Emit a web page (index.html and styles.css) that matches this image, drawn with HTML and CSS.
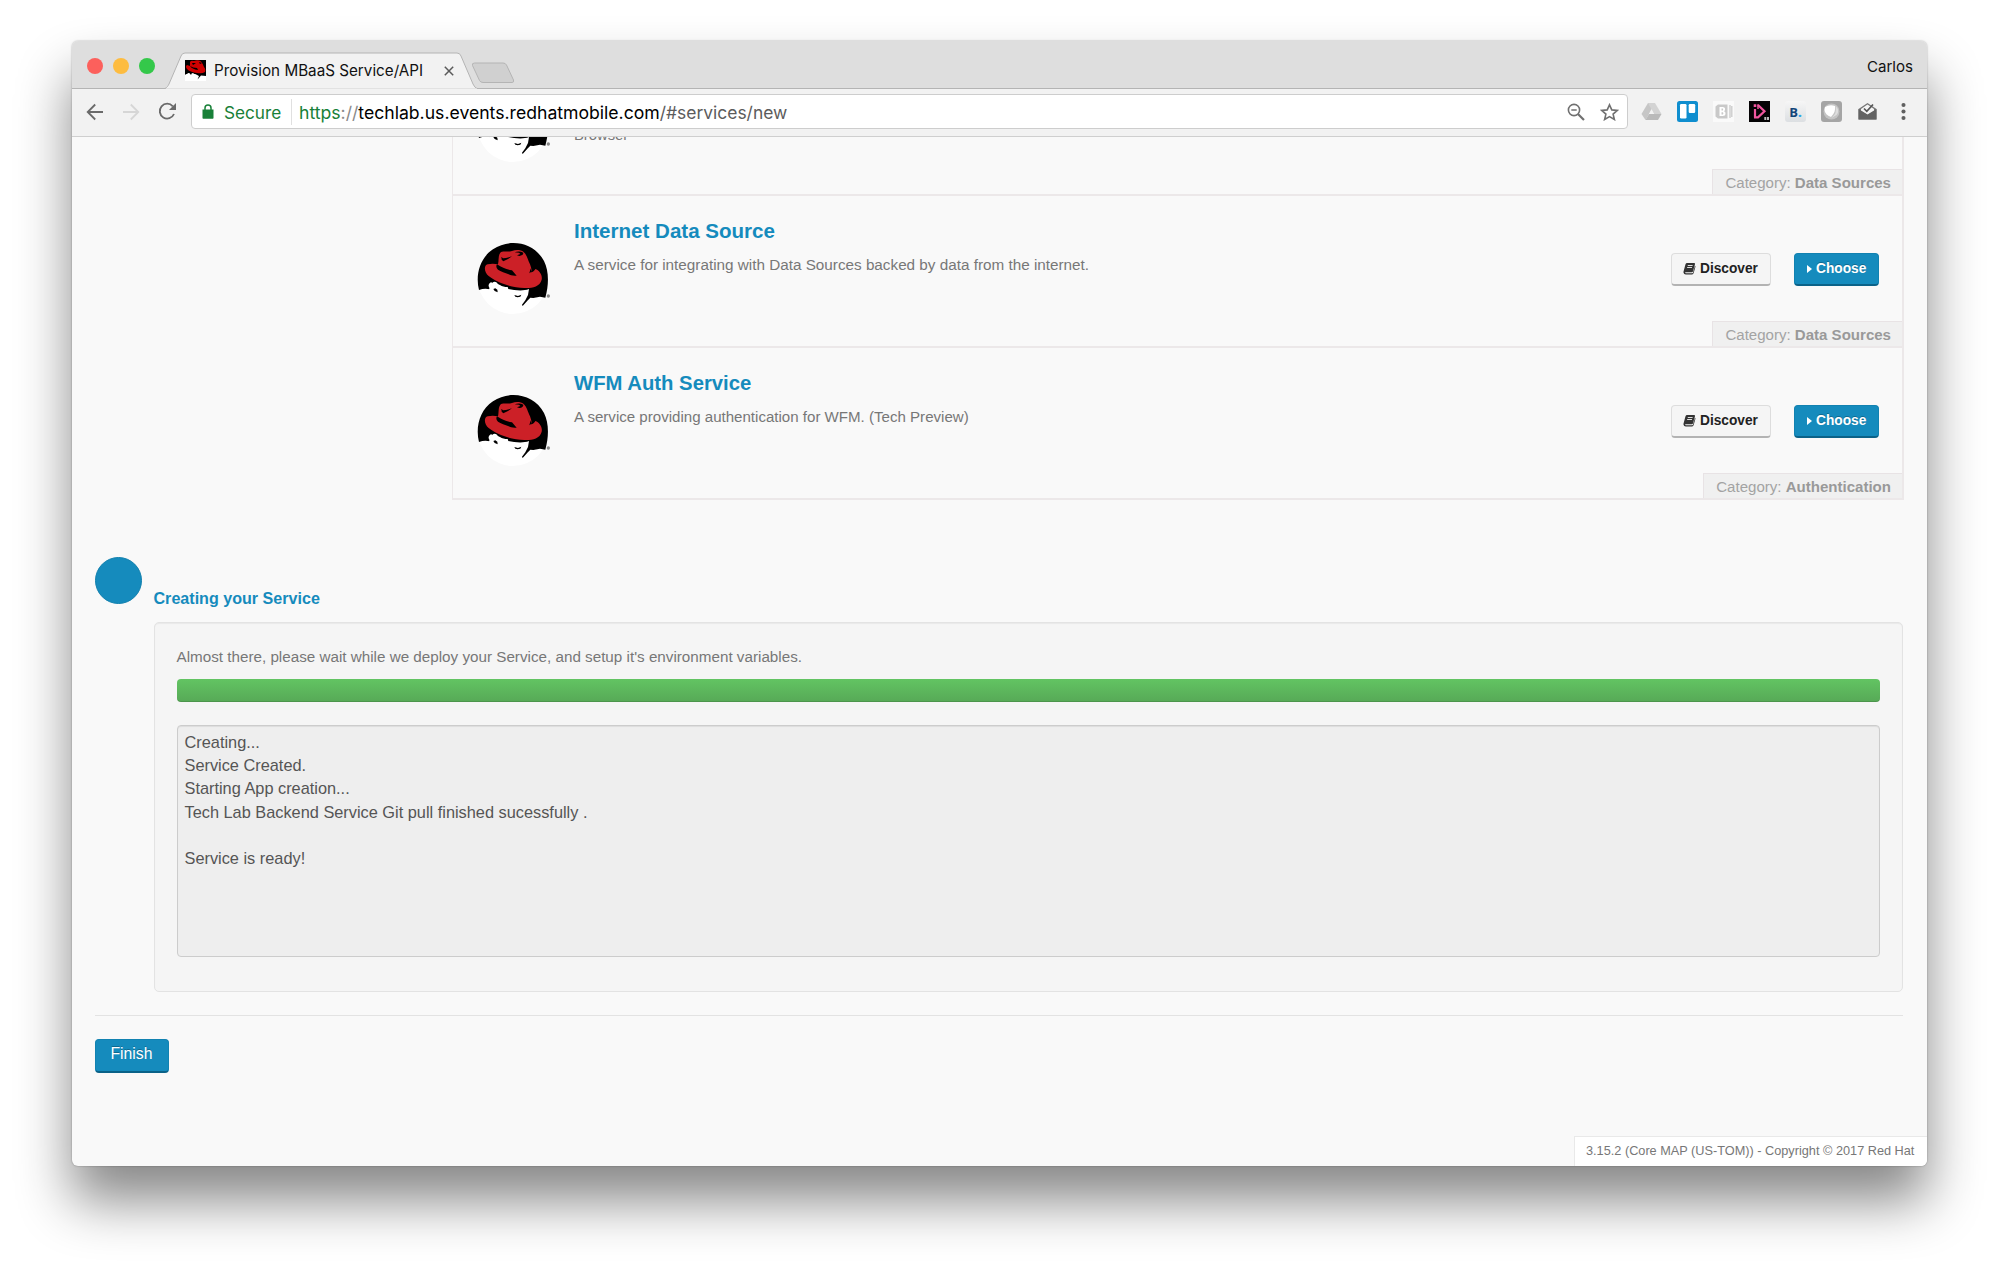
FILE: index.html
```
<!DOCTYPE html>
<html lang="en">
<head>
<meta charset="utf-8">
<title>Provision MBaaS Service/API</title>
<link rel="stylesheet" href="styles.css">
</head>
<body>
<svg class="defs" width="0" height="0" aria-hidden="true">
  <symbol id="redhat" viewBox="0 0 270 270">
    <circle cx="129" cy="149" r="106" fill="#fff"/>
    <path fill="#000" d="M27 183C16 140 28 88 69 61C120 27 192 40 222 96C237 126 237 166 226 206L210 203L190 207L181 206L172 215L158 231L156 227L166 214L174 198L177 180C160 187 134 184 115 180L113 174C104 174 96 173 90 168L84 166L86 175L92 188L80 189L72 181L76 190L64 184L70 178L66 162C66 156 54 162 56 172L60 181Q44 176 27 183Z"/>
    <path fill="#fff" d="M56 184C62 172 64 158 74 158C82 158 84 168 94 174L114 177L112 190L84 196L60 194Z"/>
    <path fill="#000" d="M70 180L76 178L82 182L83 190L74 186ZM133 198L144 201L154 197L151 203L143 205L136 203Z"/>
    <path fill="#cc2027" d="M84 106C87 94 84 80 91 71C97 64 112 70 126 66C137 62 152 62 161 69C171 78 173 92 180 106C183 116 187 124 182 130C189 130 196 122 196 120C208 124 218 138 215 152C209 174 185 178 163 177C123 176 81 161 56 141C43 130 40 109 53 106C63 104 74 104 83 106Z"/>
    <path fill="#000" d="M81 106C96 115 108 122 126 124L140 140C130 141 120 139 116 136C106 131 92 128 84 122C78 116 78 110 81 106ZM94 83L99 88L108 87L126 82L114 90L100 97L95 92ZM134 70Q148 65 160 71Q160 79 148 81L141 79L151 75L147 71ZM182 118L184 128L178 133Z"/>
    <circle cx="235" cy="201" r="5" fill="#888"/>
  </symbol>
  <symbol id="book" viewBox="0 0 14 14">
    <path fill="#333" d="M4.4 1.2H12q1.2.1.9 1.2L10.8 10q-.3 1-1.4 1H3q-1 0-.8.6.2.5.9.5h6.9q.6 0 .8-.7l2.1-7.3q.7.3.5 1.1l-2 7q-.4 1.200-1.600 1.200H3Q.9 13.300.5 11.300q-.1-.9.3-2L2.600 2.600Q3.100 1.200 4.400 1.200Z"/>
    <path fill="#ddd" d="M5.300 3.300 5 4.300h5.200l.3-1ZM4.600 5.400l-.3 1h5.200l.3-1Z"/>
  </symbol>
</svg>

<div class="window">
  <header class="tabstrip">
    <div class="lights"><i class="red"></i><i class="yellow"></i><i class="green"></i></div>
    <div class="tab">
      <svg class="tab-shape" width="313" height="37" viewBox="0 0 313 37"><path d="M0 36.500C2 35.500 3 34 4 32L16 4Q17 1 20 1H292Q295 1 296 4L308 32Q309.500 35.500 312 36.500" fill="#f2f2f2" stroke="#b4b4b4"/><path d="M1 37H312" stroke="#f2f2f2" stroke-width="1.200"/></svg>
      <svg class="favicon" width="21" height="21" viewBox="0 0 21 21"><path fill="#fff" d="M0 0H21V21H0Z"/><path d="M0 0H21V16L16 15.500 12.500 19.500 14 16 12 15 7 13 6 15 4 13 0 15Z"/><path fill="#d00000" d="M5 2Q6 0 9 1Q13-.5 16 1.500Q18 4 19 7Q21 9 20 12Q17 14 12 13Q5 12 2 9Q0 6 2 5L5 6Z"/><path d="M5 6Q8 8 12 8L13 10Q7 9 5 6ZM7 3l4 0-3 2ZM14 2l3 1-2 1Z"/><path fill="#fff" d="M0 15 4 13 6 15.500 8 13.500 12 15 13 17 9 20H0Z"/></svg>
      <span class="tab-title">Provision MBaaS Service/API</span>
      <svg class="close" width="10" height="10" viewBox="0 0 10 10"><path d="M.8.8 9.200 9.200M9.200.8.8 9.200" stroke="#5a5a5a" stroke-width="1.500"/></svg>
    </div>
    <svg class="newtab" width="44" height="22" viewBox="0 0 44 22"><path d="M3.500 1H32Q34.500 1 35.500 3L42.500 18Q43.300 20.500 41 20.500H12Q9.500 20.500 8.500 18.500L1.500 3.500Q.8 1 3.500 1Z" fill="#d0d0d0" stroke="#b4b4b4"/></svg>
    <span class="profile">Carlos</span>
  </header>

  <nav class="toolbar">
    <svg class="back" width="18" height="18" viewBox="0 0 18 18"><path d="M17 9H2M9.200 1.500 1.700 9l7.500 7.500" fill="none" stroke="#6a6a6a" stroke-width="1.800"/></svg>
    <svg class="forward" width="18" height="18" viewBox="0 0 18 18"><path d="M1 9H16M8.800 1.500 16.300 9l-7.500 7.500" fill="none" stroke="#d6d6d6" stroke-width="1.800"/></svg>
    <svg class="reload" width="19" height="19" viewBox="0 0 19 19"><path d="M14.800 4.300A7.400 7.400 0 1 0 16 12" fill="none" stroke="#6a6a6a" stroke-width="1.800"/><path d="M18 1V8H11Z" fill="#6a6a6a"/></svg>
    <div class="omnibox">
      <svg class="lock" width="12" height="15" viewBox="0 0 12 15"><path d="M.5 5.500h11V14q0 .7-.7.7H1.200Q.5 14.700.5 14Z" fill="#188038"/><path d="M3 6V4a3 3 0 0 1 6 0v2" fill="none" stroke="#188038" stroke-width="1.500"/></svg>
      <span class="secure">Secure</span>
      <span class="url"><span class="scheme">https</span><span class="dim">://</span><span class="host">techlab.us.events.redhatmobile.com</span><span class="path">/#services/new</span></span>
      <svg class="zoom" width="18" height="18" viewBox="0 0 18 18"><circle cx="7" cy="7" r="5.600" fill="none" stroke="#707070" stroke-width="1.600"/><path d="M4.300 7H9.700" stroke="#707070" stroke-width="1.300"/><path d="M11 11 17 17" stroke="#707070" stroke-width="2.200"/></svg>
      <svg class="star" width="19" height="18" viewBox="0 0 19 18"><path d="M9.500 1.800 11.800 6.900 17.300 7.400 13.100 11.100 14.400 16.500 9.500 13.600 4.600 16.500 5.900 11.100 1.700 7.400 7.200 6.900Z" fill="none" stroke="#707070" stroke-width="1.600"/></svg>
    </div>
    <div class="extensions">
      <svg width="21" height="21" viewBox="0 0 21 21"><path d="M7 2h7L8 13 4.500 19 .5 13Z" fill="#c6c6c6"/><path d="M14 2 20.500 13H13L7 2Z" fill="#d3d3d3"/><path d="M8 13H20.500L17 19H4.500Z" fill="#bababa"/><path d="M10.500 8.300 13 13H8Z" fill="#f2f2f2"/></svg>
      <svg width="21" height="21" viewBox="0 0 21 21"><rect width="21" height="21" rx="2.500" fill="#0f8ecf"/><rect x="3" y="3" width="6.500" height="14.500" rx="1.200" fill="#fff"/><rect x="11.700" y="3" width="6.500" height="9" rx="1.200" fill="#fff"/></svg>
      <svg width="21" height="21" viewBox="0 0 21 21"><rect width="21" height="21" fill="#fafafa"/><path d="M5 3.500h9.500v14H5L2.500 15.500V5.500Z" fill="#c9c9c9"/><path d="M17 4v13M18.800 5v11" stroke="#c9c9c9" stroke-width="1.300"/><path d="M6.500 6h3q3 0 2.500 2.500 0 1.300-1 1.700 1.600.5 1.500 2.300 0 2.500-3 2.500h-3ZM8.500 7.500v2h1.300q.8-1 0-2ZM8.500 11.300v2.200h1.400q1-1.100 0-2.200Z" fill="#fff" fill-rule="evenodd"/></svg>
      <svg width="21" height="21" viewBox="0 0 21 21"><rect width="21" height="21" fill="#050305"/><path d="M6 3.300V6" stroke="#f0569f" stroke-width="2.600"/><path d="M6 8V16.500M9 4l6.500 6.300L9 16.300H5" fill="none" stroke="#f0569f" stroke-width="2.200"/><path d="M9 3.300V8" stroke="#f0569f" stroke-width="1.500"/><path d="M15.300 16h2v3h-2zM18 16h2v3h-2z" fill="#bbb"/></svg>
      <span class="ext-b">B<b>.</b></span>
      <svg width="21" height="21" viewBox="0 0 21 21"><rect width="21" height="21" rx="3" fill="#a5a5a5"/><circle cx="10.500" cy="10.500" r="8" fill="#c4c4c4"/><path d="M4 6Q9 3 14 5Q15 11 10 16Q4 14 3.500 9Z" fill="#fff"/><path d="M14.500 5q5 4 1 9l-5 3q6-5 4-12Z" fill="#dedede"/></svg>
      <svg width="21" height="21" viewBox="0 0 21 21"><path d="M1.500 8 10.500 2 19.500 8V18.500H1.500Z" fill="#777"/><path d="M4 8 10.500 3.500 17 8V10L10.500 14 4 10Z" fill="#f5f5f5"/><path d="M7 7.500 9.800 10.300 16 3.500" fill="none" stroke="#555" stroke-width="1.700"/><path d="M1.500 8 10.500 13.500 19.500 8V18.500H1.500Z" fill="#636363"/></svg>
      <svg class="menu" width="21" height="21" viewBox="0 0 21 21"><g fill="#606060"><circle cx="10.500" cy="4" r="2.050"/><circle cx="10.500" cy="10.500" r="2.050"/><circle cx="10.500" cy="17" r="2.050"/></g></svg>
    </div>
  </nav>

  <main class="page">
    <div class="services">
      <article class="service first">
        <svg class="logo" width="90" height="90"><use href="#redhat"/></svg>
        <div class="info"><p class="clipped">Browser</p></div>
        <div class="category">Category: <b>Data Sources</b></div>
      </article>
      <article class="service">
        <svg class="logo" width="90" height="90"><use href="#redhat"/></svg>
        <div class="info"><h3 class="t-ids">Internet Data Source</h3><p class="d-ids">A service for integrating with Data Sources backed by data from the internet.</p></div>
        <div class="actions">
          <button class="btn discover"><svg width="13" height="13"><use href="#book"/></svg>Discover</button>
          <button class="btn choose"><i class="caret"></i>Choose</button>
        </div>
        <div class="category">Category: <b>Data Sources</b></div>
      </article>
      <article class="service">
        <svg class="logo" width="90" height="90"><use href="#redhat"/></svg>
        <div class="info"><h3>WFM Auth Service</h3><p>A service providing authentication for WFM. (Tech Preview)</p></div>
        <div class="actions">
          <button class="btn discover"><svg width="13" height="13"><use href="#book"/></svg>Discover</button>
          <button class="btn choose"><i class="caret"></i>Choose</button>
        </div>
        <div class="category">Category: <b>Authentication</b></div>
      </article>
    </div>

    <section class="step">
      <div class="bullet"></div>
      <div class="step-body">
        <h4>Creating your Service</h4>
        <div class="well">
          <p>Almost there, please wait while we deploy your Service, and setup it's environment variables.</p>
          <div class="progress"></div>
          <textarea class="log" readonly>Creating...
Service Created.
Starting App creation...
Tech Lab Backend Service Git pull finished sucessfully .

Service is ready!</textarea>
        </div>
      </div>
    </section>

    <div class="form-actions"><button class="finish">Finish</button></div>
    <footer class="version">3.15.2 (Core MAP (US-TOM)) - Copyright © 2017 Red Hat</footer>
  </main>
</div>
</body>
</html>
```
FILE: styles.css
```
* { box-sizing: border-box; margin: 0; padding: 0; }
svg { display: block; flex: none; }
.defs { position: absolute; }
html, body { height: 1269px; overflow: hidden; background: #fff; }
body { padding: 41px 72px 0; font-family: "Liberation Sans", Arial, sans-serif; }

.window {
  display: flex; flex-direction: column;
  width: 1855px; height: 1125px;
  border-radius: 6px; overflow: hidden; background: #f9f9f9;
  box-shadow: 0 35px 54px rgba(0,0,0,.47), 0 0 2px rgba(0,0,0,.35);
}

/* browser chrome */
.tabstrip {
  display: flex; flex: none; height: 48px;
  background: #dedede; border-bottom: 1px solid #b4b4b4;
  font-family: Inter, sans-serif; color: #111;
}
.lights { display: flex; gap: 10px; padding: 17px 0 0 15px; width: 93px; flex: none; }
.lights i { width: 16px; height: 16px; border-radius: 50%; }
.red { background: #fc605c; }
.yellow { background: #fdbc40; }
.green { background: #34c84a; }
.tab { position: relative; display: flex; align-items: center; width: 313px; height: 37px; margin-top: 11px; padding-left: 20px; flex: none; }
.tab-shape { position: absolute; left: 0; top: 0; }
.favicon, .tab-title, .close { position: relative; }
.tab-title { margin-left: 8px; width: 230px; font-size: 15.220px; white-space: nowrap; }
.close { margin-left: 0; }
.newtab { margin: 21px 0 0 -7px; }
.profile { margin: 16px 14px 0 auto; font-size: 15.100px; line-height: 19px; }

.toolbar {
  display: flex; align-items: center; flex: none; height: 48px;
  padding: 0 12px 2px 14px; background: #f2f2f2; border-bottom: 1px solid #cfcfcf;
}
.forward { margin-left: 18px; }
.reload { margin-left: 18px; }
.omnibox {
  display: flex; align-items: center; width: 1437px; height: 35px; margin-left: 14px;
  padding: 0 8px 0 10px; background: #fff; border: 1px solid #cdcdcd; border-radius: 4px;
  font-family: Inter, sans-serif; font-size: 17.620px;
}
.secure { margin-left: 10px; padding: 1px 9px 0 0; width: 68px; font-size: 17.200px; line-height: 25px; color: #188038; border-right: 1px solid #e0e0e0; }
.url { margin-left: 7px; padding-top: 1px; white-space: nowrap; }
.scheme { color: #188038; }
.dim { color: #8a8a8a; }
.host { color: #000; }
.path { color: #5c5c5c; font-size: 17.450px; }
.zoom { margin-left: auto; }
.star { margin-left: 15px; }
.extensions { display: flex; gap: 15px; margin-left: 13px; }
.ext-b {
  display: flex; justify-content: center; align-items: center; width: 21px; height: 21px; border-radius: 3px;
  background: linear-gradient(#f6f6f6, #dcdfe2); color: #13457a; font: bold 13px "Open Sans", sans-serif;
}
.ext-b b { color: #2fa8e8; }

/* page */
.page { position: relative; flex: 1; padding: 0 24px 0 23px; overflow: hidden; }
.services { margin: -95px 0 0 357px; border: 2px solid #ece8e9; border-top: 0; border-width: 0 2px 2px 1.500px; width: 1452px; }
.service { position: relative; display: flex; align-items: flex-start; height: 152px; border-top: 2px solid #ece8e9; padding: 33px 23px 0 17px; }
.info { margin: -10px 0 0 14px; flex: 1; }
.info h3 { font-size: 20.300px; line-height: 24px; color: #158bbd; }
.info .t-ids { font-size: 20.550px; }
.info p { margin-top: 10px; font-size: 15.080px; line-height: 24px; color: #777; }
.info .d-ids { font-size: 15.280px; }
.info .clipped { margin-top: 56px; font-size: 14.800px; }
.actions { display: flex; gap: 23px; margin-top: 24px; }
.btn { display: flex; align-items: center; height: 33px; font: bold 13.720px "Liberation Sans", Arial, sans-serif; border-radius: 4px; }
.discover { width: 100px; padding: 0 0 1px 11px; gap: 4px; color: #222; background: #f5f5f5; border: 1px solid #ddd; border-bottom: 2px solid #b3b3b3; }
.choose, .finish { color: #fff; background: #158bbd; border: 1px solid #1282b1; border-bottom: 2px solid #0b6288; text-shadow: 0 -1px 0 rgba(0,0,0,.25); }
.choose { width: 85px; padding: 0 0 1px 12px; }
.caret { border: 4px solid transparent; border-left: 5px solid #fff; border-right: 0; margin-right: 4px; }
.category {
  position: absolute; right: 0; bottom: 0; height: 25px; padding: 0 11px 0 12px; line-height: 25px;
  font-size: 15.050px; color: #a3a3a3; background: #f0f0f0; border: 1px solid #e8e3e5; border-width: 1px 0 0 1px;
}
.category b { color: #999; }

.step { display: flex; margin-top: 57px; }
.bullet { width: 47px; height: 47px; flex: none; border-radius: 50%; background: #158bbd; border: 1px solid #1080ae; }
.step-body { margin-left: 11.500px; width: 1750px; }
.step-body h4 { margin-top: 29px; font-size: 16.100px; line-height: 24px; color: #158bbd; }
.well { margin-top: 12px; height: 370px; padding: 22px 22px 0; background: #f5f5f5; border: 1px solid #e3e3e3; border-radius: 5px; box-shadow: inset 0 1px 1px rgba(0,0,0,.05); }
.well p { font-size: 15.220px; line-height: 24px; color: #777; }
.progress { margin-top: 10px; height: 23px; border-radius: 4px; background: linear-gradient(#62c462, #57a957); box-shadow: inset 0 -1px 0 rgba(0,0,0,.12); }
.log {
  display: block; width: 100%; height: 232px; margin-top: 23px; padding: 5px 7px; resize: none; outline: 0;
  font: 16.340px/23.200px "Liberation Sans", Arial, sans-serif; color: #555; background: #eee;
  border: 1px solid #ccc; border-radius: 4px; box-shadow: inset 0 1px 1px rgba(0,0,0,.075);
}
.form-actions { margin-top: 23px; padding-top: 23px; border-top: 1px solid #e3e3e3; }
.finish { display: block; width: 74px; height: 34px; padding: 0 1px 3px 0; border-radius: 4px; font: 15.750px "Liberation Sans", Arial, sans-serif; }
.version {
  position: absolute; right: 0; bottom: 0; width: 353px; height: 30px; padding-left: 11px;
  font-size: 12.720px; line-height: 28px; color: #777; background: #fff; border: 1px solid #e9e9e9; border-width: 1px 0 0 1px; white-space: nowrap;
}
```
